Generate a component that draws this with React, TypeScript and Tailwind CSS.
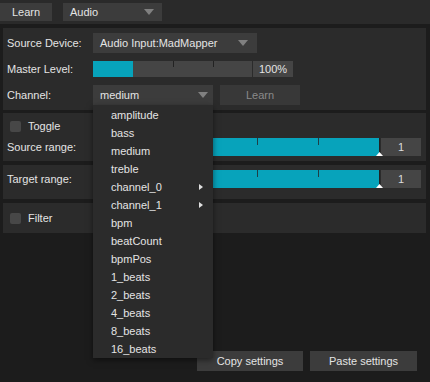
import React from 'react';

const font = { fontFamily: '"Liberation Sans", Arial, sans-serif' };

const menuItems: { label: string; sub?: boolean }[] = [
  { label: 'amplitude' },
  { label: 'bass' },
  { label: 'medium' },
  { label: 'treble' },
  { label: 'channel_0', sub: true },
  { label: 'channel_1', sub: true },
  { label: 'bpm' },
  { label: 'beatCount' },
  { label: 'bpmPos' },
  { label: '1_beats' },
  { label: '2_beats' },
  { label: '4_beats' },
  { label: '8_beats' },
  { label: '16_beats' },
];

const Caret = () => (
  <svg width="10" height="6" viewBox="0 0 10 6" className="shrink-0">
    <path d="M0 0 L10 0 L5 6 Z" fill="#808080" />
  </svg>
);

const Checkbox = () => <div className="w-[11px] h-[11px] rounded-[2px] bg-[#474747]" />;

// range slider that sits at max value
const RangeSlider = () => (
  <div className="flex items-center">
    <div className="relative w-[287px] h-[18px] bg-[#07a3bb]">
      <div className="absolute top-0 left-[42px] w-px h-[7px] bg-[#1f3f46]" />
      <div className="absolute top-0 left-[103px] w-px h-[7px] bg-[#1f3f46]" />
      <div className="absolute top-0 left-[164px] w-px h-[7px] bg-[#1f3f46]" />
      <div className="absolute top-0 left-[225px] w-px h-[7px] bg-[#1f3f46]" />
      <div className="absolute top-0 right-0 w-px h-full bg-[#222]" />
      <svg className="absolute -right-[3px] bottom-0" width="7" height="4" viewBox="0 0 7 4">
        <path d="M0 4 L3.5 0 L7 4 Z" fill="#ffffff" />
      </svg>
    </div>
    <div className="w-[40px] h-[18px] ml-px bg-[#454545] flex items-center justify-center text-[11px] text-[#dcdcdc]">
      1
    </div>
  </div>
);

export default function App() {
  return (
    <div style={font} className="relative w-[430px] h-[382px] bg-[#1c1c1c] text-[11px] text-[#e4e4e4] overflow-hidden">
      {/* top bar */}
      <div className="h-[24px] bg-[#2a2a2a] flex items-center gap-[11px]">
        <div className="w-[52px] h-[18px] bg-[#3c3c3c] flex items-center justify-center">Learn</div>
        <div className="w-[99px] h-[18px] bg-[#3c3c3c] flex items-center justify-between pl-[7px] pr-[8px]">
          <span>Audio</span>
          <Caret />
        </div>
      </div>

      <div className="pl-[3px] pr-[4px] pt-[4px] flex flex-col">
        {/* source panel */}
        <div className="bg-[#2b2b2b] h-[82px] pt-[2px] pl-[4px]">
          <div className="h-[26px] flex items-center">
            <span className="w-[86px]">Source Device:</span>
            <div className="w-[164px] h-[20px] bg-[#3c3c3c] flex items-center justify-between pl-[7px] pr-[9px]">
              <span>Audio Input:MadMapper</span>
              <Caret />
            </div>
          </div>
          <div className="h-[26px] flex items-center">
            <span className="w-[86px]">Master Level:</span>
            <div className="relative w-[159px] h-[16px] bg-[#454545]">
              <div className="absolute left-0 top-0 h-full w-[40px] bg-[#07a3bb]" />
              <div className="absolute top-0 left-[80px] w-px h-[6px] bg-[#222]" />
              <div className="absolute top-0 left-[120px] w-px h-[6px] bg-[#222]" />
            </div>
            <div className="w-[40px] h-[16px] ml-px bg-[#454545] flex items-center justify-center">100%</div>
          </div>
          <div className="h-[26px] flex items-center">
            <span className="w-[86px]">Channel:</span>
            <div className="w-[120px] h-[20px] bg-[#3c3c3c] flex items-center justify-between pl-[7px] pr-[5px]">
              <span>medium</span>
              <Caret />
            </div>
            <div className="w-[80px] h-[20px] ml-[7px] bg-[#383838] flex items-center justify-center text-[#8a8a8a]">
              Learn
            </div>
          </div>
        </div>

        {/* toggle panel */}
        <div className="mt-[3px] bg-[#2b2b2b] h-[48px] pl-[4px]">
          <div className="h-[25px] pt-[2px] flex items-center gap-[7px] pl-[3px]">
            <Checkbox />
            <span>Toggle</span>
          </div>
          <div className="h-[18px] flex items-center">
            <span className="w-[86px]">Source range:</span>
            <RangeSlider />
          </div>
        </div>

        {/* target panel */}
        <div className="mt-[4px] bg-[#2b2b2b] h-[34px] pl-[4px] pt-[5px]">
          <div className="h-[18px] flex items-center">
            <span className="w-[86px]">Target range:</span>
            <RangeSlider />
          </div>
        </div>

        {/* filter panel */}
        <div className="mt-[4px] bg-[#2b2b2b] h-[30px] pl-[7px] flex items-center gap-[7px]">
          <Checkbox />
          <span>Filter</span>
        </div>
      </div>

      {/* bottom buttons */}
      <div className="absolute left-[197px] top-[351px] flex gap-[7px]">
        <div className="w-[106px] h-[20px] bg-[#3c3c3c] flex items-center justify-center">Copy settings</div>
        <div className="w-[107px] h-[20px] bg-[#3c3c3c] flex items-center justify-center">Paste settings</div>
      </div>

      {/* open channel menu */}
      <div className="absolute left-[93px] top-[105px] w-[120px] h-[253px] pt-px bg-[#2b2b2b] shadow-[0_2px_6px_rgba(0,0,0,0.5)]">
        {menuItems.map((item) => (
          <div key={item.label} className="h-[18px] flex items-center justify-between pl-[18px] pr-[10px]">
            <span>{item.label}</span>
            {item.sub && (
              <svg width="4" height="6" viewBox="0 0 4 6">
                <path d="M0 0 L4 3 L0 6 Z" fill="#e0e0e0" />
              </svg>
            )}
          </div>
        ))}
      </div>
    </div>
  );
}
